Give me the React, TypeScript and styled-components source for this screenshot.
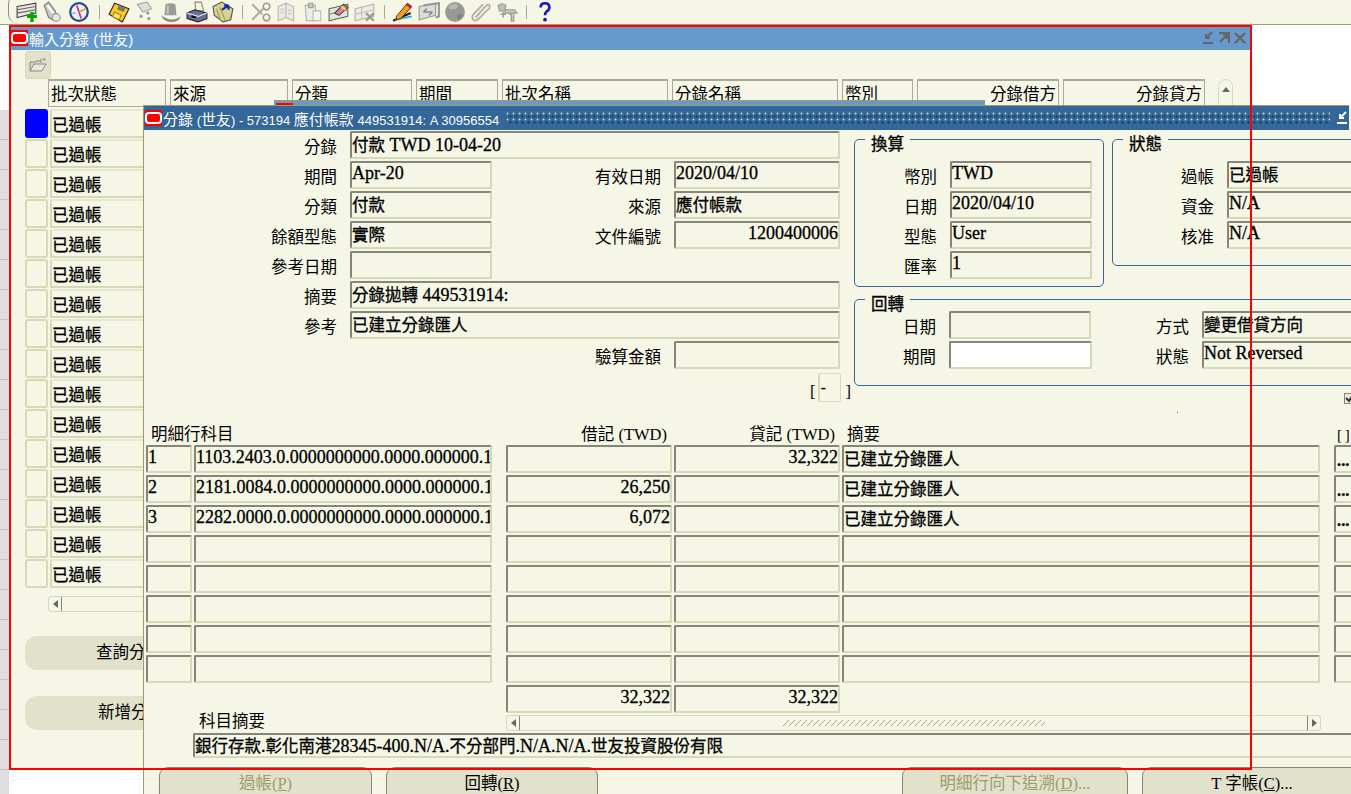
import React from "react";
import styled, { createGlobalStyle } from "styled-components";

const CREAM = "#f5f6e6";
const PALE = "#d6d9b8";
const DARK = "#85857a";
const OLIVE = "#9c9c6c";

const GlobalStyle = createGlobalStyle`
  html, body {
    margin: 0;
    padding: 0;
    background: #fff;
  }
  * {
    box-sizing: border-box;
  }
`;

const Page = styled.div`
  position: relative;
  width: 1351px;
  height: 794px;
  overflow: hidden;
  background: #fff;
  color: #000;
  font-family: "Liberation Serif", "Noto Sans CJK TC", serif;
  font-size: 16.5px;
`;

const DesktopStrip = styled.div`
  position: absolute;
  left: 0;
  top: 110px;
  width: 9px;
  height: 684px;
  background: repeating-linear-gradient(#dedede 0 29px, #c4c4c4 29px 30px);
`;

const Toolbar = styled.div`
  display: flex;
  align-items: center;
  height: 25px;
  padding-left: 14px;
  background: ${CREAM};
  border-bottom: 1px solid ${OLIVE};
  position: relative;
  &::before {
    content: "";
    position: absolute;
    left: 8px;
    top: -6px;
    width: 12px;
    height: 30px;
    border-left: 1px solid #8f8f80;
    border-radius: 10px 0 0 10px;
  }
`;

const IconSlot = styled.div`
  width: 26px;
  height: 22px;
  display: flex;
  align-items: center;
  justify-content: center;
`;

const ToolSep = styled.div<{ $w: number }>`
  width: ${(p) => p.$w}px;
  display: flex;
  justify-content: center;
  &::after {
    content: "";
    width: 1px;
    height: 14px;
    background: #a8a898;
  }
`;

const Logo = styled.div`
  width: 17px;
  height: 16px;
  background: #f00;
  display: flex;
  align-items: center;
  justify-content: center;
  flex: none;
  &::after {
    content: "";
    width: 13px;
    height: 8px;
    border: 2px solid #fff;
    border-radius: 4px;
  }
`;

const LatinRun = styled.span`
  font-size: 18px;
  line-height: 1;
`;

const TitleLatinRun = styled.span`
  font-size: 13px;
`;

const BackWindow = styled.div`
  position: absolute;
  left: 10px;
  top: 26px;
  width: 1240px;
  height: 742px;
  background: ${CREAM};
`;

const BackTitle = styled.div`
  height: 24px;
  background: #6699cc;
  color: #fff;
  display: flex;
  align-items: center;
  padding-left: 1px;
  font-family: "Liberation Sans", "Noto Sans CJK TC", sans-serif;
  font-size: 15px;
`;

const TitleText = styled.span`
  flex: 1;
  margin-left: 1px;
  white-space: nowrap;
`;

const TitleControls = styled.div`
  display: flex;
  align-items: center;
  gap: 2px;
  padding-right: 3px;
`;

const BackBody = styled.div`
  padding: 1px 0 0 15px;
`;

const OpenButton = styled.div`
  width: 26px;
  height: 28px;
  background: #e2e2cc;
  border: 1px solid ${PALE};
  border-radius: 3px;
  display: flex;
  align-items: center;
  justify-content: center;
`;

const BackHeadRow = styled.div`
  display: flex;
  gap: 4px;
  height: 30px;
  margin-left: 23px;
`;

const HeadCell = styled.div<{ $w: number; $right?: boolean }>`
  width: ${(p) => p.$w}px;
  height: 28px;
  border: 1px solid #a9a99e;
  border-top-width: 2px;
  padding: 0 2px;
  line-height: 28px;
  text-align: ${(p) => (p.$right ? "right" : "left")};
  white-space: nowrap;
`;

const ScrollUp = styled.div`
  width: 15px;
  height: 28px;
  margin-left: 9px;
  border: 1px solid ${PALE};
  border-radius: 8px 8px 0 0;
  display: flex;
  justify-content: center;
  padding-top: 7px;
  &::after {
    content: "";
    border: 4px solid transparent;
    border-top: 0;
    border-bottom: 5px solid #666;
    height: 0;
  }
`;

const BatchRow = styled.div`
  display: flex;
  gap: 2px;
  height: 30px;
`;

const Indicator = styled.div<{ $on?: boolean }>`
  width: 23px;
  height: 29px;
  background: ${(p) => (p.$on ? "#0000ff" : CREAM)};
  border: 2px solid ${(p) => (p.$on ? "#0000ff" : PALE)};
  border-radius: 3px;
`;

const StatusCell = styled.div`
  width: 117px;
  height: 29px;
  display: flex;
  align-items: center;
  border: 2px solid ${PALE};
  border-top-color: #e6e7cf;
  border-radius: 2px;
  -webkit-text-stroke: 0.3px #000;
`;

const HScroll = styled.div<{ $w: number }>`
  width: ${(p) => p.$w}px;
  height: 16px;
  border: 1px solid ${PALE};
  border-radius: 3px;
  display: flex;
  align-items: center;
  flex: none;
`;

const ScrollEnd = styled.div<{ $dir: "left" | "right" }>`
  width: 13px;
  height: 14px;
  display: flex;
  align-items: center;
  justify-content: center;
  flex: none;
  border-${(p) => (p.$dir === "left" ? "right" : "left")}: 1px solid #85857a;
  &::after {
    content: "";
    border: 4px solid transparent;
    ${(p) => (p.$dir === "left" ? "border-left: 0; border-right: 5px solid #666;" : "border-right: 0; border-left: 5px solid #666;")}
  }
`;

const ScrollTrack = styled.div`
  flex: 1;
  display: flex;
  justify-content: center;
`;

const ScrollGrip = styled.div`
  width: 262px;
  height: 6px;
  background-image: linear-gradient(135deg, transparent 42%, #a9a98a 42% 58%, transparent 58%);
  background-size: 6px 6px;
`;

const BackScrollRow = styled.div`
  margin: 7px 0 0 23px;
`;

const BackButtons = styled.div`
  display: flex;
  flex-direction: column;
  gap: 26px;
  margin-top: 24px;
`;

const BackButton = styled.div<{ $pad: number }>`
  width: 240px;
  height: 34px;
  background: #e2e2cc;
  border-radius: 12px;
  padding-left: ${(p) => p.$pad}px;
  line-height: 34px;
`;

const Sliver = styled.div`
  position: absolute;
  left: 274px;
  top: 100px;
  width: 711px;
  height: 10px;
  background: #6699cc;
  border-top: 1px solid ${OLIVE};
  padding: 2px 0 0 2px;
  overflow: hidden;
`;

const FrontWindow = styled.div`
  position: absolute;
  left: 143px;
  top: 105px;
  width: 1240px;
  height: 689px;
  background: ${CREAM};
  border-left: 1px solid ${OLIVE};
`;

const FrontTitle = styled.div`
  height: 25px;
  width: 1205px;
  background: #336699;
  border-top: 1px solid ${OLIVE};
  color: #fff;
  display: flex;
  align-items: center;
  padding-left: 1px;
  font-family: "Liberation Sans", "Noto Sans CJK TC", sans-serif;
  font-size: 15px;
  gap: 1px;
`;

const TitleGrip = styled.div`
  flex: 1;
  height: 12px;
  margin: 0 4px 0 6px;
  background-image: radial-gradient(circle at 1.5px 1.5px, #d0d3b8 0.9px, transparent 1.1px),
    radial-gradient(circle at 4.5px 4.5px, #12304f 0.9px, transparent 1.1px);
  background-size: 6px 6px;
`;

const TopSection = styled.div`
  position: relative;
  display: flex;
  gap: 14px;
  height: 295px;
  padding-top: 1px;
`;

const Speck = styled.div`
  position: absolute;
  left: 1033px;
  top: 282px;
  width: 1px;
  height: 1px;
  background: #555;
`;

const FormColumn = styled.div`
  width: 696px;
  flex: none;
`;

const FormRow = styled.div`
  display: flex;
  height: 30px;
`;

const Label = styled.div<{ $w: number }>`
  width: ${(p) => p.$w}px;
  flex: none;
  height: 28px;
  padding-top: 3px;
  padding-right: 13px;
  text-align: right;
  line-height: 28px;
  white-space: nowrap;
`;

const Field = styled.div<{ $w: number; $right?: boolean; $white?: boolean; $h?: number }>`
  width: ${(p) => p.$w}px;
  height: ${(p) => p.$h ?? 28}px;
  flex: none;
  display: flex;
  align-items: center;
  justify-content: ${(p) => (p.$right ? "flex-end" : "flex-start")};
  padding: 0 0 2px 0;
  background: ${(p) => (p.$white ? "#fff" : CREAM)};
  border-style: solid;
  border-width: 2px;
  border-color: ${DARK} ${PALE} ${PALE} ${DARK};
  border-radius: 2px;
  white-space: nowrap;
  overflow: hidden;
  -webkit-text-stroke: 0.3px #000;
`;

const BracketRow = styled.div`
  display: flex;
  align-items: flex-end;
  height: 30px;
  margin: 1px 0 0 666px;
  width: 42px;
  line-height: 20px;
`;

const BracketField = styled.div`
  width: 23px;
  height: 29px;
  margin: 0 5px 0 2px;
  padding-left: 1px;
  border: 1px solid ${PALE};
  border-left: 2px solid ${PALE};
  border-radius: 2px;
  line-height: 28px;
  flex: none;
  font-weight: bold;
`;

const RightColumn = styled.div`
  flex: 1;
  min-width: 0;
  display: flex;
  flex-direction: column;
`;

const TopGroups = styled.div`
  display: flex;
  align-items: flex-start;
  gap: 8px;
  margin-top: 8px;
`;

const GroupBox = styled.div<{ $w: number; $h: number; $pt: number }>`
  position: relative;
  width: ${(p) => p.$w}px;
  height: ${(p) => p.$h}px;
  flex: none;
  padding-top: ${(p) => p.$pt}px;
  border: 1px solid #336699;
  border-radius: 5px;
`;

const GroupTitle = styled.span`
  position: absolute;
  top: -5px;
  left: 10px;
  padding: 0 6px;
  background: ${CREAM};
  line-height: 20px;
  -webkit-text-stroke: 0.3px #000;
`;

const ReverseBox = styled(GroupBox)`
  margin-top: 12px;
`;

const CheckRow = styled.div`
  margin: 7px 0 0 490px;
  width: 12px;
  height: 11px;
  border: 1px solid ${DARK};
  background: #e8e8d4;
  display: flex;
`;

const TableArea = styled.div`
  padding-left: 2px;
`;

const TableRow = styled.div<{ $h?: number }>`
  display: flex;
  gap: 2px;
  height: ${(p) => p.$h ?? 30}px;
`;

const ColHead = styled.div<{ $w: number; $right?: boolean }>`
  width: ${(p) => p.$w}px;
  flex: none;
  height: 20px;
  line-height: 20px;
  padding: 0 ${(p) => (p.$right ? "5px" : "0")} 0 ${(p) => (p.$right ? "0" : "5px")};
  text-align: ${(p) => (p.$right ? "right" : "left")};
  white-space: nowrap;
`;

const TinyHead = styled(ColHead)`
  padding-left: 3px;
  font-size: 15px;
  letter-spacing: -0.5px;
`;

const Gutter = styled.div`
  width: 10px;
  flex: none;
`;

const EmptyCol = styled.div<{ $w: number }>`
  width: ${(p) => p.$w}px;
  flex: none;
`;

const DotsButton = styled(Field)`
  font-weight: bold;
  padding: 4px 0 0 1px;
`;

const DescLabel = styled.div`
  width: 346px;
  flex: none;
  padding-left: 53px;
  align-self: flex-end;
  line-height: 18px;
  margin-bottom: 2px;
`;

const DescRow = styled.div`
  padding-left: 47px;
`;

const ButtonBar = styled.div`
  display: flex;
  gap: 14px;
  margin-top: 9px;
  padding-left: 15px;
`;

const ActionButton = styled.div<{ $w: number; $off?: boolean; $push?: number }>`
  width: ${(p) => p.$w}px;
  height: 34px;
  flex: none;
  margin-left: ${(p) => p.$push ?? 0}px;
  padding-top: 2px;
  background: #e2e2cc;
  border: 1px solid ${DARK};
  border-bottom: 0;
  border-radius: 9px 9px 0 0;
  text-align: center;
  color: ${(p) => (p.$off ? "#9c9c6c" : "#000")};
`;

const Accel = styled.span`
  text-decoration: underline;
`;

const RedFrame = styled.div`
  position: absolute;
  left: 9px;
  top: 25px;
  width: 1243px;
  height: 745px;
  border: 2px solid #f00;
  pointer-events: none;
`;

// field values mix a wide latin face with the CJK one, so ascii runs get their own size
const splitRuns = (text: string) => text.split(/([\x20-\x7e]+)/).filter(Boolean);
const isLatin = (run: string) => /^[\x20-\x7e]+$/.test(run);

const Val = ({ children }: { children: string }) => (
  <span>
    {splitRuns(children).map((run, i) => (isLatin(run) ? <LatinRun key={i}>{run}</LatinRun> : run))}
  </span>
);

const TitleVal = ({ children }: { children: string }) => (
  <span>
    {splitRuns(children).map((run, i) => (isLatin(run) ? <TitleLatinRun key={i}>{run}</TitleLatinRun> : run))}
  </span>
);

const Ico = ({ children }: { children: React.ReactNode }) => (
  <IconSlot>
    <svg width="22" height="22" viewBox="0 0 20 20">
      {children}
    </svg>
  </IconSlot>
);

const GREY = "#a8a8a0";

const NewRowIcon = () => (
  <Ico>
    <path d="M1 5 18 2v9L1 15z" fill="#e8e8e0" stroke="#444" />
    <path d="M1 8 18 5M1 11 18 8" stroke="#666" />
    <path d="M10 14h9M14.500 10v9" stroke="#0a0" strokeWidth="3" />
  </Ico>
);
const FlashlightIcon = () => (
  <Ico>
    <path d="M2 4 6 1l6 8 2 6-3 3-5-3z" fill="#c8c8c0" stroke="#777" />
    <path d="M5 4 10 11" stroke="#fff" strokeWidth="2" />
    <circle cx="13" cy="15" r="3.500" fill="#e8e8e0" stroke="#999" />
  </Ico>
);
const CompassIcon = () => (
  <Ico>
    <circle cx="10" cy="10" r="8" fill="#eef0f8" stroke="#234a8c" strokeWidth="2" />
    <path d="M8 4l4 12" stroke="#d0208a" strokeWidth="1.500" />
    <path d="M10 10 16 7" stroke="#e0a020" strokeWidth="1.500" />
    <path d="M4 11h3" stroke="#888" />
  </Ico>
);
const SaveIcon = () => (
  <Ico>
    <path d="M6 2 19 7l-6 12L1 12z" fill="#ffcc22" stroke="#222" />
    <path d="M10 4l6 2.500-2 3.500-6-2.500z" fill="#777" />
    <path d="M6 10l6 3-2 4-6-3z" fill="#ffe680" stroke="#b08000" />
  </Ico>
);
const GreyGridIcon = () => (
  <Ico>
    <path d="M3 3 12 1l4 6-8 3z" fill="#dededa" stroke={GREY} />
    <path d="M5 14h3M6.500 12.500v3M11 11h3M12.500 9.500v3M12 16h3M13.500 14.500v3" stroke="#999" strokeWidth="1.500" />
  </Ico>
);
const HatIcon = () => (
  <Ico>
    <path d="M5 3q5-2 9 0l1 10H4z" fill="#9a9a96" />
    <path d="M1 13q9 7 18 1-2 5-9 5t-9-6z" fill="#888884" />
    <path d="M7 4v8" stroke="#c4c4c0" strokeWidth="2" />
  </Ico>
);
const PrintIcon = () => (
  <Ico>
    <path d="M8 1h6l2 8H9z" fill="#f4f4d8" stroke="#888" />
    <path d="M1 11l7-3 11 3v5l-8 3-10-3z" fill="#6a7090" stroke="#222" />
    <path d="M1 11l10 3 8-3" stroke="#dde" fill="none" />
    <path d="M5 14l4 1" stroke="#111" strokeWidth="2" />
  </Ico>
);
const FolderIcon = () => (
  <Ico>
    <path d="M1 5 9 1l10 6-2 10-7 2-8-6z" fill="#d8d490" stroke="#555" />
    <path d="M4 7l4 11M7 5.500l5 12" stroke="#a09c50" />
    <path d="M15 4 9 8M15 4l-4 0M15 4v4" stroke="#1030b0" strokeWidth="2" />
  </Ico>
);
const ScissorsIcon = () => (
  <Ico>
    <path d="M2 3l9 9M2 17 12 7" stroke="#b0b0a8" strokeWidth="2" />
    <circle cx="15" cy="5" r="3" fill="none" stroke="#a0a098" strokeWidth="1.500" />
    <circle cx="15" cy="15" r="3" fill="none" stroke="#a0a098" strokeWidth="1.500" />
  </Ico>
);
const CopyIcon = () => (
  <Ico>
    <path d="M2 5l7-3v13l-7 3zM9 2l7 3v13l-7-3z" fill="#ecece4" stroke="#b8b8b0" />
    <path d="M4 8l3-1M4 11l3-1M11 8l3 1M11 11l3 1" stroke="#c0c0b8" />
  </Ico>
);
const PasteIcon = () => (
  <Ico>
    <path d="M3 4h9l1 14H4z" fill="#ecece4" stroke="#b0b0a8" />
    <path d="M6 2h4v4H6z" fill="#c8c8c0" stroke="#a0a098" />
    <path d="M10 9h7v9h-7z" fill="#f4f4ee" stroke="#b8b8b0" />
  </Ico>
);
const EraseIcon = () => (
  <Ico>
    <path d="M1 7 18 3v11L1 18z" fill="#e4e4da" stroke="#666" />
    <path d="M1 12 18 8" stroke="#888" />
    <path d="M6 11 14 3l4 3-8 7z" fill="#e080a0" stroke="#444" />
    <path d="M12 5l4 3" stroke="#ffd040" strokeWidth="2" />
  </Ico>
);
const ClearRowIcon = () => (
  <Ico>
    <path d="M1 7 18 3v11L1 18z" fill="#ecece4" stroke="#b4b4aa" />
    <path d="M1 12 18 8M7 5v12" stroke="#c0c0b8" />
    <path d="M11 11l7 7M18 11l-7 7" stroke="#999" strokeWidth="2" />
  </Ico>
);
const PencilIcon = () => (
  <Ico>
    <path d="M1 18 17 11" stroke="#222" strokeWidth="2" />
    <path d="M3 17 18 14" stroke="#39a0e0" strokeWidth="1.500" />
    <path d="M4 14 14 2l4 3-10 11-4 1z" fill="#f0a020" stroke="#402000" strokeWidth="0.800" />
    <path d="M14 2l4 3-1 2-4-3z" fill="#d02020" />
  </Ico>
);
const WindowsIcon = () => (
  <Ico>
    <path d="M1 5 16 2v11L1 17z" fill="#dcdcd4" stroke="#999" />
    <path d="M5 4 19 2v12l-3 1" fill="none" stroke="#999" strokeWidth="2" />
    <path d="M5 10h8M5 10l3-3M13 10l-3 3" stroke="#888" strokeWidth="1.500" />
  </Ico>
);
const GlobeIcon = () => (
  <Ico>
    <circle cx="10" cy="10" r="9" fill="#999994" />
    <path d="M4 5q5-4 9-1-2 5-5 3-3 2-4-2z" fill="#b8b8b4" />
    <path d="M12 13q4-2 5 0-2 4-5 4z" fill="#808080" />
  </Ico>
);
const ClipIcon = () => (
  <Ico>
    <path d="M5 15 15 4q3-2 3 1 0 2-2 3l-9 9q-4 2-5-2 0-2 2-4l8-8" fill="none" stroke="#b4b4ac" strokeWidth="1.800" />
  </Ico>
);
const ToolsIcon = () => (
  <Ico>
    <path d="M2 4q4-3 7 0l-1 5H3z" fill="#c0c0b8" stroke="#999" />
    <path d="M9 8h8l2 3H8z" fill="#c8c8c0" stroke="#999" />
    <path d="M4 12h5M6.500 10v5M12 12h2v6h2v-6" stroke="#a0a098" strokeWidth="1.500" fill="none" />
  </Ico>
);
const HelpIcon = () => (
  <Ico>
    <path d="M6 6q0-4 4-4t4 4q0 2-2.500 3.500Q10 11 10 13" fill="none" stroke="#1a1ab0" strokeWidth="2.400" />
    <circle cx="10" cy="17" r="1.700" fill="#1a1ab0" />
  </Ico>
);

const OpenIcon = () => (
  <svg width="18" height="16" viewBox="0 0 18 16">
    <path d="M1 14V5h5l1-1h5v2" fill="#d8d8c8" stroke="#888" />
    <path d="M1 14 5 7h12l-4 7z" fill="#e8e8dc" stroke="#888" />
    <path d="M11 3q3-2 5 0l-2 0M16 3v-2" fill="none" stroke="#999" />
  </svg>
);

const MinIcon = ({ color }: { color: string }) => (
  <svg width="14" height="14" viewBox="0 0 14 14">
    <path d="M11 1 5 7M5 3v4h4M2 12h10" fill="none" stroke={color} strokeWidth="2" />
  </svg>
);
const MaxIcon = ({ color }: { color: string }) => (
  <svg width="14" height="14" viewBox="0 0 14 14">
    <path d="M2 2h10v10M3 11l7-7M6 4h4v4" fill="none" stroke={color} strokeWidth="2" />
  </svg>
);
const CloseIcon = ({ color }: { color: string }) => (
  <svg width="14" height="14" viewBox="0 0 14 14">
    <path d="M2 2l10 10M12 2 2 12" fill="none" stroke={color} strokeWidth="2.400" />
  </svg>
);
const TickIcon = () => (
  <svg width="10" height="9" viewBox="0 0 10 9">
    <path d="M1 4l3 3 4-6" fill="none" stroke="#333" strokeWidth="2" />
  </svg>
);

const HEADS: [string, number, boolean?][] = [
  ["批次狀態", 118],
  ["來源", 118],
  ["分類", 120],
  ["期間", 82],
  ["批次名稱", 166],
  ["分錄名稱", 166],
  ["幣別", 71],
  ["分錄借方", 142, true],
  ["分錄貸方", 142, true],
];

const ENTRIES: [string, string, string, string, string][] = [
  ["1", "1103.2403.0.0000000000.0000.000000.1", "", "32,322", "已建立分錄匯人"],
  ["2", "2181.0084.0.0000000000.0000.000000.1", "26,250", "", "已建立分錄匯人"],
  ["3", "2282.0000.0.0000000000.0000.000000.1", "6,072", "", "已建立分錄匯人"],
  ["", "", "", "", ""],
  ["", "", "", "", ""],
  ["", "", "", "", ""],
  ["", "", "", "", ""],
  ["", "", "", "", ""],
];

const App = () => {
  return (
    <Page>
      <GlobalStyle />
      <DesktopStrip />
      <Toolbar>
        <NewRowIcon />
        <FlashlightIcon />
        <CompassIcon />
        <ToolSep $w={14} />
        <SaveIcon />
        <GreyGridIcon />
        <HatIcon />
        <PrintIcon />
        <FolderIcon />
        <ToolSep $w={12} />
        <ScissorsIcon />
        <CopyIcon />
        <PasteIcon />
        <EraseIcon />
        <ClearRowIcon />
        <ToolSep $w={12} />
        <PencilIcon />
        <WindowsIcon />
        <GlobeIcon />
        <ClipIcon />
        <ToolsIcon />
        <ToolSep $w={12} />
        <HelpIcon />
      </Toolbar>

      <BackWindow>
        <BackTitle>
          <Logo />
          <TitleText>輸入分錄 (世友)</TitleText>
          <TitleControls>
            <MinIcon color="#666" />
            <MaxIcon color="#666" />
            <CloseIcon color="#666" />
          </TitleControls>
        </BackTitle>
        <BackBody>
          <OpenButton>
            <OpenIcon />
          </OpenButton>
          <BackHeadRow>
            {HEADS.map(([text, w, right]) => (
              <HeadCell key={text} $w={w} $right={right}>
                {text}
              </HeadCell>
            ))}
            <ScrollUp />
          </BackHeadRow>
          {Array.from({ length: 16 }).map((_, i) => (
            <BatchRow key={i}>
              <Indicator $on={i === 0} />
              <StatusCell>已過帳</StatusCell>
            </BatchRow>
          ))}
          <BackScrollRow>
            <HScroll $w={200}>
              <ScrollEnd $dir="left" />
            </HScroll>
          </BackScrollRow>
          <BackButtons>
            <BackButton $pad={71}>查詢分錄</BackButton>
            <BackButton $pad={73}>新增分錄</BackButton>
          </BackButtons>
        </BackBody>
      </BackWindow>

      <Sliver>
        <Logo />
      </Sliver>

      <FrontWindow>
        <FrontTitle>
          <Logo />
          <TitleVal>分錄 (世友) - 573194 應付帳款 449531914: A 30956554</TitleVal>
          <TitleGrip />
          <MinIcon color="#fff" />
        </FrontTitle>

        <TopSection>
          <FormColumn>
            <FormRow>
              <Label $w={206}>分錄</Label>
              <Field $w={490}>
                <Val>付款 TWD 10-04-20</Val>
              </Field>
            </FormRow>
            <FormRow>
              <Label $w={206}>期間</Label>
              <Field $w={142}>
                <Val>Apr-20</Val>
              </Field>
              <Label $w={182}>有效日期</Label>
              <Field $w={166}>
                <Val>2020/04/10</Val>
              </Field>
            </FormRow>
            <FormRow>
              <Label $w={206}>分類</Label>
              <Field $w={142}>付款</Field>
              <Label $w={182}>來源</Label>
              <Field $w={166}>應付帳款</Field>
            </FormRow>
            <FormRow>
              <Label $w={206}>餘額型態</Label>
              <Field $w={142}>實際</Field>
              <Label $w={182}>文件編號</Label>
              <Field $w={166} $right>
                <Val>1200400006</Val>
              </Field>
            </FormRow>
            <FormRow>
              <Label $w={206}>參考日期</Label>
              <Field $w={142} />
            </FormRow>
            <FormRow>
              <Label $w={206}>摘要</Label>
              <Field $w={490}>
                <Val>分錄拋轉 449531914:</Val>
              </Field>
            </FormRow>
            <FormRow>
              <Label $w={206}>參考</Label>
              <Field $w={490}>已建立分錄匯人</Field>
            </FormRow>
            <FormRow>
              <Label $w={530}>驗算金額</Label>
              <Field $w={166} />
            </FormRow>
            <BracketRow>
              [<BracketField>-</BracketField>]
            </BracketRow>
          </FormColumn>

          <RightColumn>
            <TopGroups>
              <GroupBox $w={250} $h={148} $pt={21}>
                <GroupTitle>換算</GroupTitle>
                <FormRow>
                  <Label $w={95}>幣別</Label>
                  <Field $w={142}>
                    <Val>TWD</Val>
                  </Field>
                </FormRow>
                <FormRow>
                  <Label $w={95}>日期</Label>
                  <Field $w={142}>
                    <Val>2020/04/10</Val>
                  </Field>
                </FormRow>
                <FormRow>
                  <Label $w={95}>型態</Label>
                  <Field $w={142}>
                    <Val>User</Val>
                  </Field>
                </FormRow>
                <FormRow>
                  <Label $w={95}>匯率</Label>
                  <Field $w={142}>
                    <Val>1</Val>
                  </Field>
                </FormRow>
              </GroupBox>
              <GroupBox $w={400} $h={127} $pt={21}>
                <GroupTitle>狀態</GroupTitle>
                <FormRow>
                  <Label $w={114}>過帳</Label>
                  <Field $w={280}>已過帳</Field>
                </FormRow>
                <FormRow>
                  <Label $w={114}>資金</Label>
                  <Field $w={280}>
                    <Val>N/A</Val>
                  </Field>
                </FormRow>
                <FormRow>
                  <Label $w={114}>核准</Label>
                  <Field $w={280}>
                    <Val>N/A</Val>
                  </Field>
                </FormRow>
              </GroupBox>
            </TopGroups>
            <ReverseBox $w={660} $h={87} $pt={11}>
              <GroupTitle>回轉</GroupTitle>
              <FormRow>
                <Label $w={94}>日期</Label>
                <Field $w={142} />
                <Label $w={111}>方式</Label>
                <Field $w={280}>變更借貸方向</Field>
              </FormRow>
              <FormRow>
                <Label $w={94}>期間</Label>
                <Field $w={143} $white />
                <Label $w={110}>狀態</Label>
                <Field $w={280}>
                  <Val>Not Reversed</Val>
                </Field>
              </FormRow>
            </ReverseBox>
            <CheckRow>
              <TickIcon />
            </CheckRow>
          </RightColumn>
          <Speck />
        </TopSection>

        <TableArea>
          <TableRow $h={20}>
            <ColHead $w={346}>明細行科目</ColHead>
            <Gutter />
            <ColHead $w={166} $right>
              借記 (TWD)
            </ColHead>
            <ColHead $w={166} $right>
              貸記 (TWD)
            </ColHead>
            <ColHead $w={478}>摘要</ColHead>
            <Gutter />
            <TinyHead $w={18}>[ ]</TinyHead>
          </TableRow>
          {ENTRIES.map((row, i) => (
            <TableRow key={i}>
              <Field $w={46}>
                <Val>{row[0]}</Val>
              </Field>
              <Field $w={298}>
                <Val>{row[1]}</Val>
              </Field>
              <Gutter />
              <Field $w={166} $right>
                <Val>{row[2]}</Val>
              </Field>
              <Field $w={166} $right>
                <Val>{row[3]}</Val>
              </Field>
              <Field $w={478}>{row[4]}</Field>
              <Gutter />
              <DotsButton $w={60}>{i < 3 ? "..." : ""}</DotsButton>
            </TableRow>
          ))}
          <TableRow>
            <EmptyCol $w={346} />
            <Gutter />
            <Field $w={166} $right>
              <Val>32,322</Val>
            </Field>
            <Field $w={166} $right>
              <Val>32,322</Val>
            </Field>
          </TableRow>
          <TableRow $h={18}>
            <DescLabel>科目摘要</DescLabel>
            <Gutter />
            <HScroll $w={815}>
              <ScrollEnd $dir="left" />
              <ScrollTrack>
                <ScrollGrip />
              </ScrollTrack>
              <ScrollEnd $dir="right" />
            </HScroll>
          </TableRow>
          <DescRow>
            <Field $w={1160} $h={25}>
              <Val>銀行存款.彰化南港28345-400.N/A.不分部門.N/A.N/A.世友投資股份有限</Val>
            </Field>
          </DescRow>
        </TableArea>

        <ButtonBar>
          <ActionButton $w={213} $off>
            過帳(<Accel>P</Accel>)
          </ActionButton>
          <ActionButton $w={212}>
            回轉(<Accel>R</Accel>)
          </ActionButton>
          <ActionButton $w={226} $off $push={290}>
            明細行向下追溯(<Accel>D</Accel>)...
          </ActionButton>
          <ActionButton $w={220}>
            T 字帳(<Accel>C</Accel>)...
          </ActionButton>
        </ButtonBar>
      </FrontWindow>

      <RedFrame />
    </Page>
  );
};

export default App;
